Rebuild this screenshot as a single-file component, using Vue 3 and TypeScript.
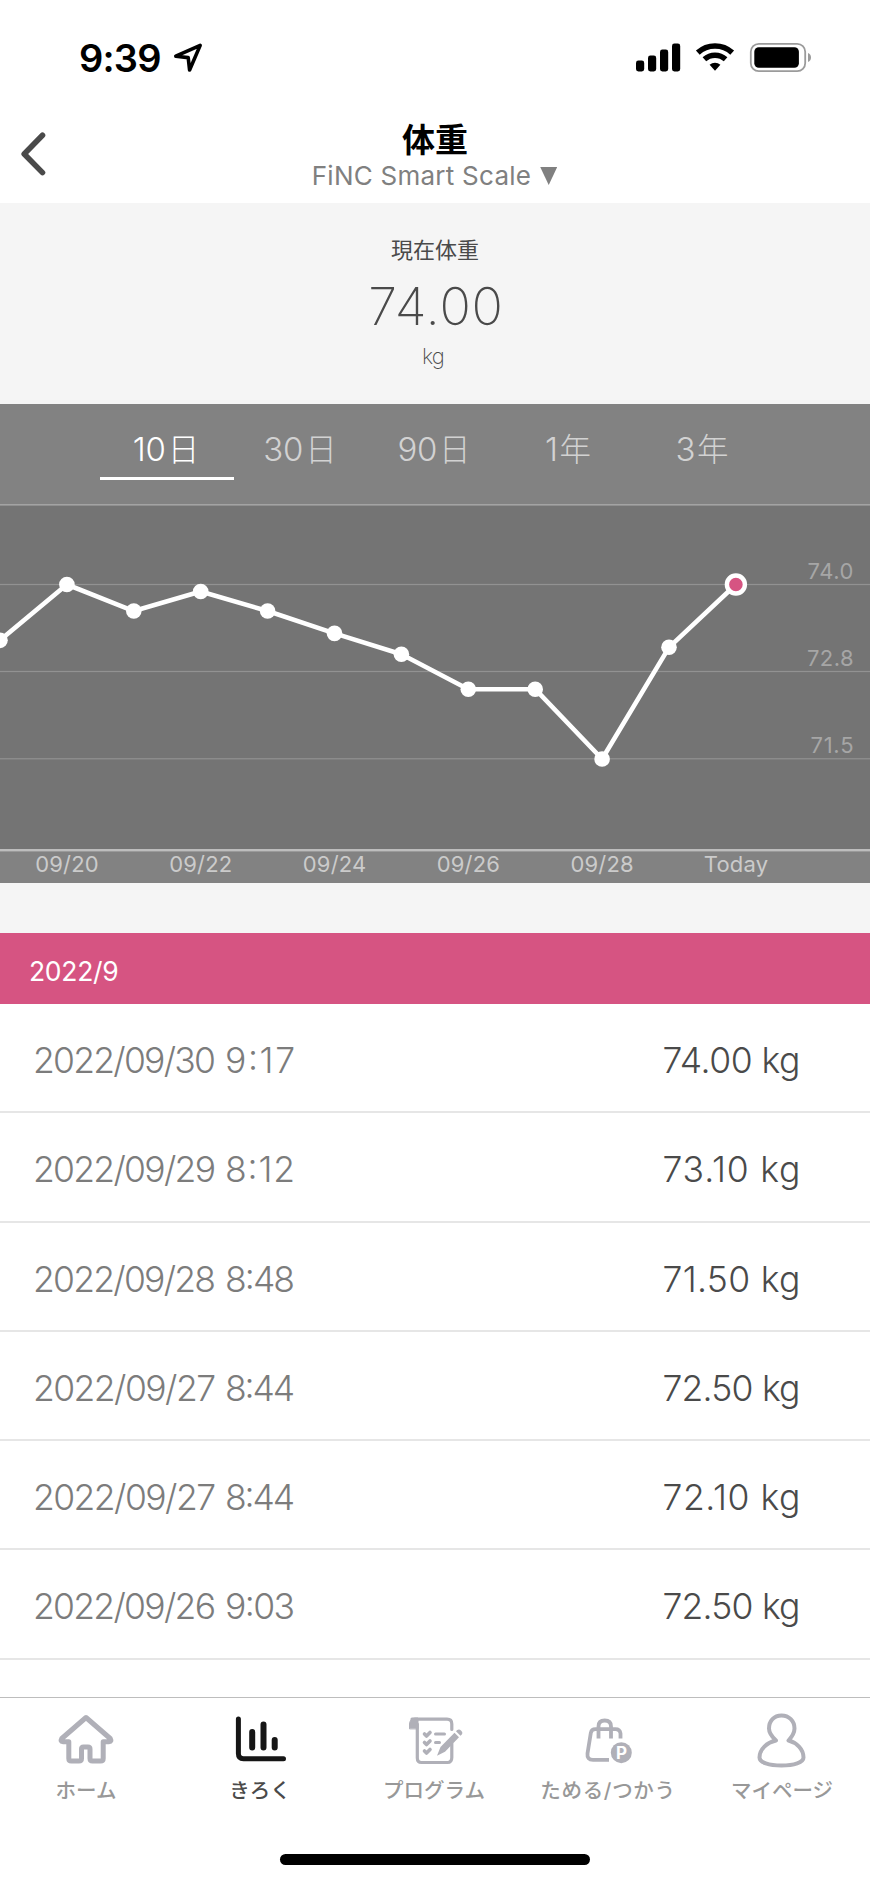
<script setup lang="ts">
import { ref } from 'vue'

interface Range { count: string; unit: string }
interface Entry { date: string; time: string; kg: string }
interface Tab { id: string; label: string }

const ranges: Range[] = [
  { count: '10', unit: '日' },
  { count: '30', unit: '日' },
  { count: '90', unit: '日' },
  { count: '1', unit: '年' },
  { count: '3', unit: '年' },
]
const activeRange = ref(0)

const values = [73.2, 74.0, 73.62, 73.9, 73.62, 73.3, 73.0, 72.5, 72.5, 71.5, 73.1, 74.0]
const points = values.map((v, i) => ({ x: i * 66.9, y: 80.5 + (74 - v) * 69.8 }))
const line = points.map((p) => `${p.x},${p.y}`).join(' ')
const last = points[points.length - 1]
const grid = [
  { y: 80.5, label: '74.0', width: 46 },
  { y: 167.5, label: '72.8', width: 46.5 },
  { y: 254.8, label: '71.5', width: 43 },
]
const days = ['09/20', '09/22', '09/24', '09/26', '09/28', 'Today']

const entries: Entry[] = [
  { date: '2022/09/30', time: '9:17', kg: '74.00' },
  { date: '2022/09/29', time: '8:12', kg: '73.10' },
  { date: '2022/09/28', time: '8:48', kg: '71.50' },
  { date: '2022/09/27', time: '8:44', kg: '72.50' },
  { date: '2022/09/27', time: '8:44', kg: '72.10' },
  { date: '2022/09/26', time: '9:03', kg: '72.50' },
]

const tabs: Tab[] = [
  { id: 'home', label: 'ホーム' },
  { id: 'record', label: 'きろく' },
  { id: 'program', label: 'プログラム' },
  { id: 'shop', label: 'ためる/つかう' },
  { id: 'me', label: 'マイページ' },
]
const activeTab = ref('record')
</script>

<template>
  <div class="screen">
    <div class="status">
      <span class="time">9:39</span>
      <svg class="loc" width="32" height="32" viewBox="0 0 32 32"><path d="M27.2 3.4 2.8 14.2 15.2 15.6 16.6 28Z" fill="none" stroke="#000" stroke-width="3.6" stroke-linejoin="round" /></svg>
      <svg class="signals" width="180" height="32" viewBox="0 0 180 32">
        <rect x="1" y="18.500" width="8.2" height="11" rx="2.4" />
        <rect x="13" y="13.500" width="8.2" height="16" rx="2.4" />
        <rect x="25" y="7.500" width="8.2" height="22" rx="2.4" />
        <rect x="37" y="1.500" width="8.2" height="28" rx="2.4" />
        <path d="M62.8 10.6a25.5 25.5 0 0 1 34.4 0" fill="none" stroke="#000" stroke-width="5.6" />
        <path d="M69.4 17.2a16 16 0 0 1 21.2 0" fill="none" stroke="#000" stroke-width="5.4" />
        <path d="M74.6 22.8a8.2 8.2 0 0 1 10.8 0L80 28.8Z" />
        <rect x="115.8" y="1.8" width="54.4" height="27.4" rx="8" fill="none" stroke="#9b9b9b" stroke-width="1.8" />
        <rect x="119.3" y="5.2" width="44.6" height="20.6" rx="4.5" />
        <path d="M173 11c4 1.400 4 7.600 0 9Z" fill="#9b9b9b" />
      </svg>
    </div>

    <header class="nav">
      <svg class="back" width="28" height="44" viewBox="0 0 28 44"><path d="M22.500 3.200 4.200 22 22.500 40.600" fill="none" stroke="#4a4a4a" stroke-width="5.600" stroke-linecap="round" stroke-linejoin="round" /></svg>
      <div class="heading">
        <h1>体重</h1>
        <p><span>FiNC Smart Scale</span><i class="caret"></i></p>
      </div>
    </header>

    <section class="current">
      <span class="caption">現在体重</span>
      <span class="amount">74.00</span>
      <span class="unit">kg</span>
    </section>

    <section class="chart">
      <nav class="ranges">
        <button v-for="(r, i) in ranges" :key="i" :class="{ on: i === activeRange }" @click="activeRange = i">{{ r.count }}<span>{{ r.unit }}</span></button>
      </nav>
      <svg class="plot" width="870" height="379" viewBox="0 0 870 379">
        <rect width="870" height="346" fill="#747474" />
        <rect width="870" height="1.600" fill="#a3a3a3" />
        <g v-for="g in grid" :key="g.label">
          <rect x="0" :y="g.y - 0.6" width="870" height="1.2" fill="#929292" />
          <text class="level" x="853.500" :y="g.y - 5.5" :textLength="g.width">{{ g.label }}</text>
        </g>
        <rect y="345" width="870" height="2.400" fill="#bdbdbd" />
        <polyline :points="line" fill="none" stroke="#fff" stroke-width="4.600" stroke-linejoin="round" />
        <circle v-for="p in points" :key="p.x" :cx="p.x" :cy="p.y" r="7.800" fill="#fff" />
        <circle :cx="last.x" :cy="last.y" r="9" fill="#d65482" stroke="#fff" stroke-width="4.400" />
        <text v-for="(d, i) in days" :key="d" class="day" :x="67 + i * 133.800" y="368">{{ d }}</text>
      </svg>
    </section>

    <div class="gap"></div>
    <h2 class="month">2022/9</h2>
    <ul class="log">
      <li v-for="(e, i) in entries" :key="i">
        <svg width="280" height="107">
          <text class="at" x="0" y="68.500" textLength="183">{{ e.date }}</text>
          <text class="at" x="192" y="68.500" textLength="70">{{ e.time }}</text>
        </svg>
        <svg width="150" height="107"><text class="kg" x="11.500" y="68.500" textLength="138">{{ e.kg }} kg</text></svg>
      </li>
    </ul>

    <footer class="tabbar">
      <button v-for="t in tabs" :key="t.id" :class="{ on: t.id === activeTab }" @click="activeTab = t.id">
        <svg width="60" height="60" viewBox="0 0 60 60" fill="none" stroke="currentColor" stroke-linecap="round" stroke-linejoin="round">
          <path v-if="t.id === 'home'" stroke-width="5" d="M30 9.500 5.800 30.500Q4 33.800 7 33.800H12.800V50.500Q12.800 53 15.300 53H23Q25.500 53 25.500 50.500V41Q25.500 39 27.500 39H32Q34 39 34 41V50.500Q34 53 36.500 53H44.700Q47.200 53 47.200 50.500V33.800H53Q56 33.800 54.200 30.500Z" />
          <g v-else-if="t.id === 'record'">
            <path stroke-width="5" d="M8.400 11V45.500Q8.400 50.700 13.500 50.700H53.500" />
            <path stroke-width="6" d="M22.200 24V39.500M33.500 16.500V39.500M44.700 32V39.500" />
          </g>
          <g v-else-if="t.id === 'program'">
            <path stroke-width="3.200" d="M8 11.200H43Q47.800 11.200 47.800 16V21.500M47.800 35.500V49.500Q47.800 54.500 43.500 54.500H17.500Q13.300 54.500 13.300 50V16" />
            <path fill="currentColor" stroke-width="1" d="M5.500 20.500V16Q6 10.500 11 10H14V20.500Z" />
            <path stroke-width="3.600" d="M20.500 26 22.500 28 26 24.500M20.500 34.500 22.500 36.500 26 33M20.500 43 22.500 45 26 41.500" />
            <path stroke-width="3" d="M31.500 26H40.500M31.500 34.500H35.500" />
            <path fill="currentColor" stroke="none" d="M50.500 24.800 55 29.300 41 43.800 33 47.800 36.500 39Z" />
            <path fill="currentColor" stroke="none" d="M52 23.300 53.200 22Q55.200 20.500 57.200 22.700 59.300 24.500 57.600 26.700L56.500 27.800Z" />
          </g>
          <g v-else-if="t.id === 'shop'">
            <path stroke-width="3.800" stroke-linecap="butt" d="M42.500 30.500V25.500Q41.800 21.200 37.500 21.200H17.500Q13.500 21.200 12.800 25L9.500 45.500Q8.800 51.800 15 51.800H31" />
            <path stroke-width="3.800" stroke-linecap="butt" d="M20.500 30.500V18.500Q20.500 12.500 26.700 12.500 33 12.500 33 18.500V30.500" />
            <circle cx="43.300" cy="44.700" r="10.500" fill="currentColor" stroke="none" />
            <text class="point" x="43.500" y="50.700">P</text>
          </g>
          <path v-else stroke-width="4" d="M24 32.500Q17 26 17 20.500C17 13 22 7.500 29.500 7.500S42.500 13 42.500 20.500Q42.500 26 36.500 32.500C44.500 34.500 51.500 41 51.500 49.500 51.500 54.500 42 57.500 29.500 57.500S7.500 54.500 7.500 49.500C7.500 41 15 34.500 24 32.500Z" />
        </svg>
        <span :class="t.id">{{ t.label }}</span>
      </button>
      <i class="indicator"></i>
    </footer>
  </div>
</template>

<style>
body { margin: 0; }
</style>
<style scoped>
.screen { width: 870px; height: 1883px; overflow: hidden; display: flex; flex-direction: column; background: #fff; font-family: Inter, "Noto Sans CJK JP", sans-serif; color: #4a4a4a; }
button { border: 0; background: none; padding: 0; font: inherit; color: inherit; }
h1, h2, p, ul { margin: 0; padding: 0; font-weight: 400; }
.status { height: 116px; flex: none; box-sizing: border-box; padding: 42px 55px 0 79px; display: flex; align-items: flex-start; }
.time { font-size: 38px; line-height: 32px; font-weight: 600; color: #000; letter-spacing: -0.800px; }
.loc { margin-left: 12.500px; }
.signals { margin-left: auto; }
.nav { height: 87px; flex: none; display: grid; grid-template-columns: 60px 1fr 60px; }
.back { margin: 16px 0 0 19.500px; }
.heading { display: flex; flex-direction: column; align-items: center; }
h1 { font-size: 33px; line-height: 40px; font-weight: 700; color: #000; margin-top: 4px; }
.heading p { display: flex; align-items: center; gap: 9px; font-size: 26px; line-height: 34px; letter-spacing: 0.25px; color: #808080; margin: -1px 1px 0 0; }
.caret { width: 17px; height: 18px; background: #808080; clip-path: polygon(0 0, 100% 0, 50% 100%); }
.current { height: 201px; flex: none; background: #f5f5f5; display: flex; flex-direction: column; align-items: center; }
.caption { font-size: 22px; line-height: 30px; margin-top: 32px; }
.amount { font-size: 52px; line-height: 60px; font-weight: 200; letter-spacing: 0.800px; margin: 12px 0 0 2px; }
.unit { font-size: 22px; line-height: 30px; font-weight: 200; letter-spacing: -0.800px; margin: 4px 4px 0 0; }
.chart { height: 479px; flex: none; background: #828282; }
.ranges { height: 100px; padding: 0 100px; display: flex; }
.ranges button { width: 134px; height: 76px; box-sizing: border-box; padding: 15px 2px 0 0; border-bottom: 3px solid transparent; font-size: 33px; line-height: 60px; font-weight: 300; letter-spacing: -0.300px; color: #d2d2d2; }
.ranges span { font-size: 31.500px; letter-spacing: 0; margin-left: 2px; }
.ranges .on { color: #fff; border-color: #fff; }
.plot { display: block; }
.level { font: 400 22px Inter, sans-serif; fill: #a6a6a6; text-anchor: end; }
.day { font: 400 22px Inter, sans-serif; fill: #cbcbcb; text-anchor: middle; letter-spacing: 0.2px; }
.gap { height: 50px; flex: none; background: #f5f5f5; }
.month { height: 71px; flex: none; box-sizing: border-box; background: #d65482; color: #fff; font-size: 26.500px; line-height: 77px; letter-spacing: -0.3px; padding-left: 29px; }
.log { list-style: none; }
.log li { height: 107.3px; border-bottom: 2px solid #e6e6e6; display: flex; justify-content: space-between; padding: 0 69px 0 33px; font-size: 35.500px; font-weight: 300; }
.at { fill: #7c7c7c; }
.kg { fill: #4a4a4a; }
.tabbar { margin-top: auto; height: 186px; flex: none; box-sizing: border-box; border-top: 1px solid #bdbdbd; display: grid; grid-template-columns: repeat(5, 174px); grid-template-rows: 156px auto; background: #fff; }
.tabbar button { display: flex; flex-direction: column; align-items: center; padding: 10px 2px 0 0; color: #b0b0b8; font-size: 20.500px; font-weight: 500; }
.tabbar button span { color: #989898; line-height: 30px; margin-top: 8px; white-space: nowrap; }
.tabbar button .shop { letter-spacing: 0.700px; }
.tabbar .on { color: #161616; }
.tabbar button.on span { color: #4a4a4a; }
.point { font: 700 17px Inter, sans-serif; fill: #fff; stroke: none; text-anchor: middle; }
.indicator { grid-column: 1 / -1; justify-self: center; width: 310px; height: 11px; border-radius: 6px; background: #000; }
</style>
